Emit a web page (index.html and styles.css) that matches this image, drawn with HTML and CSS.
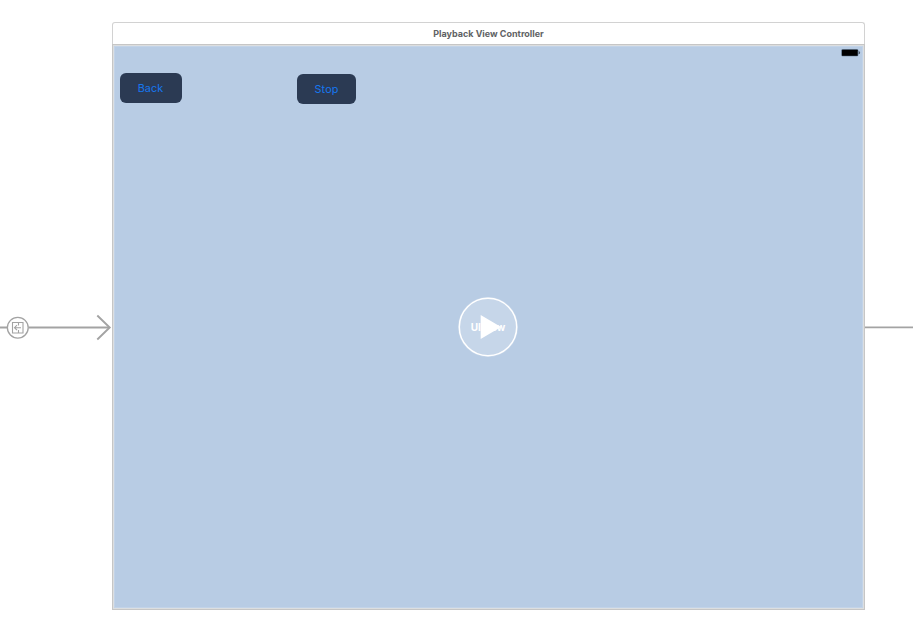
FILE: index.html
```html
<!DOCTYPE html>
<html lang="en">
<head>
<meta charset="utf-8">
<title>Storyboard</title>
<link rel="stylesheet" href="styles.css">
</head>
<body>
<main class="canvas">
  <svg class="segue-in" width="112" height="30" viewBox="0 0 112 30" fill="none" stroke="#a3a3a3">
    <path d="M0 15.5H7M28.5 15.5H109" stroke-width="1.8"/>
    <path d="M97.3 3.5L109.7 15.5L97.3 27.5" stroke-width="1.9"/>
    <circle cx="17.8" cy="15.7" r="10.4" stroke-width="1.3"/>
    <path d="M12.5 10.5H23V21H12.5ZM18.5 10.5V13.5M18.5 18V21M21 15.7H15M17 13.2L14.5 15.7L17 18.2" stroke-width="1.1"/>
  </svg>
  <section class="scene">
    <header class="title">Playback View Controller</header>
    <div class="frame">
      <div class="view">
        <svg class="battery" width="20" height="8" viewBox="0 0 20 8">
          <rect x="0.3" y="0.2" width="17" height="7" rx="1.2" fill="#53677d"/>
          <rect x="1" y=".7" width="15.6" height="6" rx=".5" fill="#000"/>
          <path d="M18 2.4Q19.3 3.7 18 5Z" fill="#222" stroke="#34414f" stroke-width=".5"/>
        </svg>
        <nav class="toolbar">
          <button class="button back">Back</button>
          <button class="button stop">Stop</button>
        </nav>
        <div class="player">
          <span>UIView</span>
          <svg class="play" width="60" height="60" viewBox="0 0 60 60">
            <circle cx="30" cy="30" r="28.7" fill="none" stroke="#fff" stroke-width="1.5"/>
            <path d="M22.7 18L43 30L22.7 42Z" fill="#fff"/>
          </svg>
        </div>
      </div>
    </div>
  </section>
  <svg class="segue-out" width="48" height="4" viewBox="0 0 48 4">
    <path d="M0 2.4H48" stroke="#a3a3a3" stroke-width="1.8"/>
  </svg>
</main>
</body>
</html>
```
FILE: styles.css
```css
* { box-sizing: border-box; }
body {
  margin: 0;
  background: #fff;
  font-family: Inter, "Liberation Sans", sans-serif;
  overflow: hidden;
}
.canvas {
  display: grid;
  grid-template-columns: 112px 753px 48px;
  align-items: start;
  height: 636px;
}
.segue-in { display: block; margin-top: 312px; }
.segue-out { display: block; margin-top: 325px; }
.scene { margin-top: 21.5px; height: 588px; display: flex; flex-direction: column; }
.title {
  height: 22.5px;
  flex: none;
  border: 1px solid #d2d2d2;
  border-bottom: 0;
  border-radius: 3px 3px 0 0;
  color: #606264;
  font-size: 9px;
  font-weight: 700;
  line-height: 22px;
  text-align: center;
}
.frame {
  flex: 1;
  border: 1px solid #c6c6c6;
  padding: 1px;
  background: #dcdedf;
}
.view {
  height: 100%;
  border: 1px solid #c2d3e8;
  background: #b8cce4;
  display: flex;
  flex-direction: column;
}
.battery { display: block; align-self: flex-end; margin: 1.5px 1px 0 0; }
.toolbar { display: flex; align-items: flex-start; padding: 16px 0 0 4.5px; }
.button {
  height: 30px;
  padding: 1px 0 0;
  border: 0;
  border-radius: 6px;
  background: #2b3a53;
  color: #1677f0;
  font: 400 10.8px/30px Inter, "Liberation Sans", sans-serif;
  letter-spacing: .1px;
}
.back { width: 62px; }
.stop { width: 59px; margin: 1px 0 0 115.5px; }
.player {
  display: grid;
  place-items: center;
  width: 60px;
  height: 60px;
  margin: 193.5px 0 0 343px;
  border-radius: 50%;
  background: #c6d6e9;
  color: #fff;
  font-size: 10px;
  font-weight: 700;
}
.player > * { grid-area: 1 / 1; }
```
